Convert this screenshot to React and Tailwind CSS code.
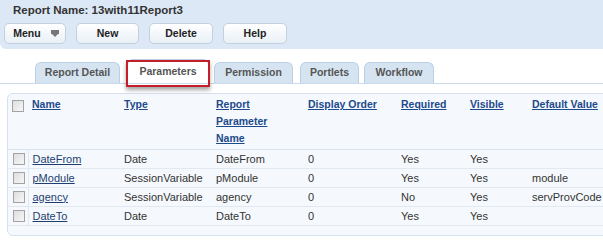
const rows = [
  { name: "DateFrom", type: "Date", param: "DateFrom", order: "0", req: "Yes", vis: "Yes", def: "" },
  { name: "pModule", type: "SessionVariable", param: "pModule", order: "0", req: "Yes", vis: "Yes", def: "module" },
  { name: "agency", type: "SessionVariable", param: "agency", order: "0", req: "No", vis: "Yes", def: "servProvCode" },
  { name: "DateTo", type: "Date", param: "DateTo", order: "0", req: "Yes", vis: "Yes", def: "" },
];

function Btn({ children, w }) {
  return (
    <button
      className={`${w} h-[21px] rounded-[5px] border border-[#c3d0de] bg-gradient-to-b from-white to-[#e9f0f7] text-[10.5px] font-bold text-[#222] flex items-center justify-center`}
    >
      {children}
    </button>
  );
}

function Check() {
  return (
    <span className="block w-[12px] h-[12px] border border-[#a3a3a3] bg-gradient-to-br from-[#dedede] to-[#f7f7f7]" />
  );
}

function Tab({ children, w, ml }) {
  return (
    <div
      className={`${w} ${ml} h-[21px] rounded-t-[6px] border border-b-0 border-[#bcd0e5] bg-[#d6e4f2] text-[10.5px] font-bold text-[#555] flex items-center justify-center`}
    >
      {children}
    </div>
  );
}

export default function App() {
  return (
    <div className="w-[603px] h-[243px] overflow-hidden bg-white font-['Liberation_Sans',Arial,sans-serif]">
      {/* header */}
      <div className="h-[49px] bg-[#dce8f5] rounded-bl-[6px] pl-[4px]">
        <div className="pl-[9px] pt-[3px] text-[11.5px] leading-[14px] font-bold text-[#333]">
          Report Name: 13with11Report3
        </div>
        <div className="flex gap-[10px] mt-[6px]">
          <Btn w="w-[62px]">
            <span className="flex items-center gap-[10px] pl-[2px]">
              Menu
              <svg width="8" height="8" viewBox="0 0 8 8">
                <rect x="0" y="0" width="8" height="4" fill="#777" />
                <path d="M1 4 L7 4 L4 7 Z" fill="#777" />
              </svg>
            </span>
          </Btn>
          <Btn w="w-[63px]">New</Btn>
          <Btn w="w-[64px]">Delete</Btn>
          <Btn w="w-[64px]">Help</Btn>
        </div>
      </div>

      {/* tabs */}
      <div className="mt-[11px] flex items-end border-b border-[#c9daec] h-[24px]">
        <Tab w="w-[85px]" ml="ml-[35px]">Report Detail</Tab>
        <div className="relative ml-[7px]">
          <div className="w-[82px] h-[24px] rounded-t-[6px] border border-b-0 border-[#bcd0e5] bg-white text-[10.5px] font-bold text-[#555] flex items-center justify-center">
            Parameters
          </div>
          <div className="absolute left-[-1px] top-[1px] w-[84px] h-[27px] border-2 border-[#c41e2a] shadow-[0_3px_4px_rgba(0,0,0,0.35)]" />
        </div>
        <Tab w="w-[79px]" ml="ml-[5px]">Permission</Tab>
        <Tab w="w-[59px]" ml="ml-[7px]">Portlets</Tab>
        <Tab w="w-[70px]" ml="ml-[5px]">Workflow</Tab>
      </div>

      {/* table */}
      <div className="mt-[9px] ml-[7px] w-[700px] h-[143px] border border-[#d5e1ee] rounded-[6px] bg-[#f5f9fd]">
        <table className="border-collapse table-fixed text-[11px] text-[#333]">
          <colgroup>
            <col className="w-[20px]" />
            <col className="w-[92px]" />
            <col className="w-[92px]" />
            <col className="w-[92px]" />
            <col className="w-[93px]" />
            <col className="w-[69px]" />
            <col className="w-[62px]" />
            <col className="w-[160px]" />
          </colgroup>
          <thead>
            <tr className="h-[55px] border-b border-[#d8e4f0] align-top text-left text-[10.5px] font-bold leading-[17px] text-[#1d4a8c]">
              <th className="pl-[4px] pt-[6px]">
                <Check />
              </th>
              <th className="pl-[4px] pt-[2px]"><span className="underline">Name</span></th>
              <th className="pl-[4px] pt-[2px]"><span className="underline">Type</span></th>
              <th className="pl-[4px] pt-[2px] pr-[20px]"><span className="underline">Report Parameter Name</span></th>
              <th className="pl-[4px] pt-[2px]"><span className="underline">Display Order</span></th>
              <th className="pl-[4px] pt-[2px]"><span className="underline">Required</span></th>
              <th className="pl-[4px] pt-[2px]"><span className="underline">Visible</span></th>
              <th className="pl-[4px] pt-[2px]"><span className="underline">Default Value</span></th>
            </tr>
          </thead>
          <tbody>
            {rows.map((r) => (
              <tr key={r.name} className="h-[19px] border-b border-[#e0e8f1] leading-[14px]">
                <td className="pl-[5px] border-r border-[#e0e8f1]">
                  <Check />
                </td>
                <td className="pl-[4px]">
                  <span className="underline text-[#1f3e70]">{r.name}</span>
                </td>
                <td className="pl-[4px]">{r.type}</td>
                <td className="pl-[4px]">{r.param}</td>
                <td className="pl-[4px]">{r.order}</td>
                <td className="pl-[4px]">{r.req}</td>
                <td className="pl-[4px]">{r.vis}</td>
                <td className="pl-[4px]">{r.def}</td>
              </tr>
            ))}
          </tbody>
        </table>
      </div>
    </div>
  );
}
